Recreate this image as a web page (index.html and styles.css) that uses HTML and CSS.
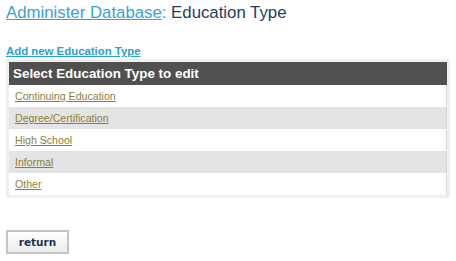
FILE: index.html
```html
<!DOCTYPE html>
<html>
<head>
<meta charset="utf-8">
<link rel="stylesheet" href="styles.css">
</head>
<body>
<div class="page">
  <h1 class="title"><a href="#" class="crumb">Administer Database</a><span class="sep">:</span> Education Type</h1>
  <a href="#" class="add-link">Add new Education Type</a>
  <div class="panel">
    <div class="panel-head">Select Education Type to edit</div>
    <ul class="list">
      <li class="row"><a href="#">Continuing Education</a></li>
      <li class="row alt"><a href="#">Degree/Certification</a></li>
      <li class="row"><a href="#">High School</a></li>
      <li class="row alt"><a href="#">Informal</a></li>
      <li class="row"><a href="#">Other</a></li>
    </ul>
  </div>
  <button class="btn-return" type="button">return</button>
</div>
</body>
</html>
```

FILE: styles.css
```css
html, body {
  margin: 0;
  padding: 0;
  background: #ffffff;
}
body {
  font-family: "Liberation Sans", Arial, sans-serif;
}
.page {
  padding: 0 6px;
  display: flex;
  flex-direction: column;
  align-items: flex-start;
}
.title {
  margin: 2px 0 0 0;
  font-size: 16.8px;
  font-weight: normal;
  line-height: 21px;
  color: #1e3c64;
}
.crumb {
  color: #3aa0d8;
  text-decoration: underline;
}
.sep {
  color: #3aa0d8;
}
.add-link {
  margin-top: 22px;
  font-size: 11.4px;
  font-weight: bold;
  line-height: 13px;
  color: #2a9fd6;
  text-decoration: underline;
}
.panel {
  align-self: stretch;
  margin-top: 1px;
  background: #f0f0f0;
  padding: 3px;
}
.panel-head {
  background: #505050;
  color: #ffffff;
  font-size: 13.4px;
  font-weight: bold;
  height: 23px;
  line-height: 23px;
  padding-left: 4px;
}
.list {
  list-style: none;
  margin: 0;
  padding: 0;
  border-right: 1px solid #d8d8d8;
  background: #ffffff;
}
.row {
  height: 22px;
  line-height: 22px;
  padding-left: 6px;
  font-size: 10.6px;
  background: #ffffff;
}
.row.alt {
  background: #e4e4e4;
}
.row a {
  color: #8c7f3c;
  text-decoration: underline;
}
.btn-return {
  margin-top: 32px;
  width: 63px;
  height: 24px;
  border: 2px solid #c4c4c4;
  background: linear-gradient(#ffffff, #ececec);
  font-family: "DejaVu Sans", Verdana, sans-serif;
  font-weight: bold;
  font-size: 10.5px;
  color: #1e3250;
  padding: 0;
}
```
